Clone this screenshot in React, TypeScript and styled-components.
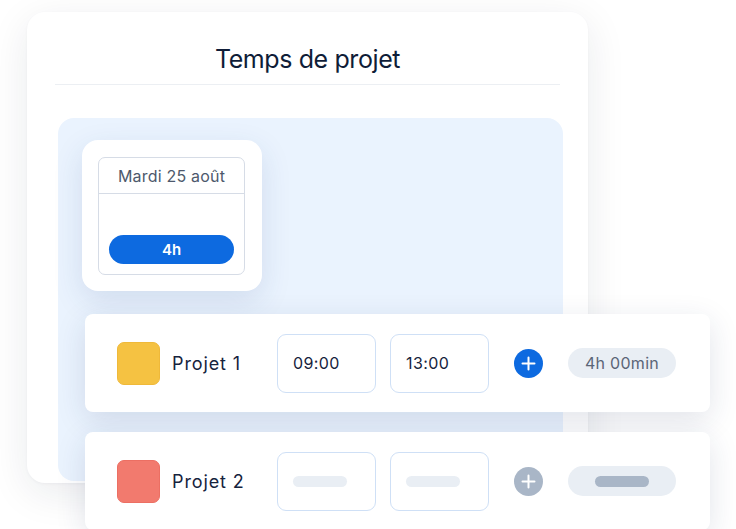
import React from "react";
import styled, { createGlobalStyle } from "styled-components";

const GlobalStyle = createGlobalStyle`
	html, body {
		margin: 0;
		padding: 0;
		background: #ffffff;
	}
	body {
		font-family: Inter, "Open Sans", "Liberation Sans", sans-serif;
		color: #13213b;
	}
`;

const Stage = styled.div`
	width: 736px;
	height: 529px;
	overflow: hidden;
	box-sizing: border-box;
	padding: 12px 0 0 27px;
	background: #ffffff;
`;

const Card = styled.div`
	width: 561px;
	height: 471px;
	border-radius: 18px;
	background: #ffffff;
	box-shadow: 0 10px 40px rgba(20, 30, 60, 0.09), 0 1px 3px rgba(20, 30, 60, 0.04);
	display: flex;
	flex-direction: column;
`;

const Header = styled.div`
	height: 73px;
	box-sizing: border-box;
	padding-top: 22px;
	margin: 0 28px;
	border-bottom: 1px solid #eceff3;
	display: flex;
	align-items: center;
	justify-content: center;
`;

const Title = styled.h1`
	margin: 0;
	font-size: 25px;
	font-weight: 400;
	letter-spacing: -0.4px;
	color: #0f1d38;
`;

const Panel = styled.div`
	margin: 33px 25px 0 31px;
	height: 363px;
	border-radius: 16px;
	background: #eaf3fe;
	box-sizing: border-box;
	padding: 22px 0 0 24px;
`;

const DateCard = styled.div`
	width: 180px;
	height: 151px;
	box-sizing: border-box;
	padding: 17px 17px 16px 16px;
	border-radius: 16px;
	background: #ffffff;
	box-shadow: 0 10px 30px rgba(40, 70, 130, 0.13);
	display: flex;
`;

const DayBox = styled.div`
	flex: 1;
	border: 1px solid #d6dce6;
	border-radius: 7px;
	display: flex;
	flex-direction: column;
`;

const DayHead = styled.div`
	height: 35px;
	border-bottom: 1px solid #d6dce6;
	display: flex;
	align-items: center;
	justify-content: center;
	font-size: 16px;
	letter-spacing: 0.2px;
	color: #4d596c;
`;

const DayBody = styled.div`
	flex: 1;
	display: flex;
	align-items: flex-end;
	padding: 0 10px 10px;
`;

const HoursPill = styled.div`
	flex: 1;
	height: 29px;
	border-radius: 15px;
	background: #0d6ae0;
	color: #ffffff;
	font-size: 15px;
	font-weight: 600;
	display: flex;
	align-items: center;
	justify-content: center;
`;

const Row = styled.div<{ $gap: number }>`
	margin: ${(p) => p.$gap}px 0 0 3px;
	width: 625px;
	height: 98px;
	flex-shrink: 0;
	box-sizing: border-box;
	padding-left: 32px;
	border-radius: 8px;
	background: #ffffff;
	box-shadow: 0 8px 30px rgba(30, 50, 90, 0.13);
	display: flex;
	align-items: center;
`;

const Swatch = styled.div<{ $color: string; $edge: string }>`
	width: 43px;
	height: 43px;
	box-sizing: border-box;
	border-radius: 7px;
	background: ${(p) => p.$color};
	border: 1px solid ${(p) => p.$edge};
`;

const Name = styled.div`
	width: 105px;
	margin-left: 12px;
	font-size: 18px;
	font-weight: 400;
	letter-spacing: 0.9px;
	color: #16233d;
`;

const TimeBox = styled.div`
	width: 99px;
	height: 59px;
	box-sizing: border-box;
	margin-right: 14px;
	padding-left: 15px;
	border: 1.5px solid #cfe0f6;
	border-radius: 9px;
	display: flex;
	align-items: center;
	font-size: 16px;
	font-weight: 400;
	letter-spacing: 0.4px;
	color: #16233d;
`;

const Placeholder = styled.div<{ $color: string }>`
	width: 54px;
	height: 11px;
	border-radius: 6px;
	background: ${(p) => p.$color};
`;

const AddButton = styled.div<{ $color: string }>`
	width: 29px;
	height: 29px;
	margin-left: 11px;
	border-radius: 50%;
	background: ${(p) => p.$color};
	display: flex;
	align-items: center;
	justify-content: center;
`;

const Total = styled.div`
	width: 108px;
	height: 30px;
	margin-left: 25px;
	border-radius: 15px;
	background: #e9eef4;
	display: flex;
	align-items: center;
	justify-content: center;
	font-size: 16px;
	font-weight: 400;
	letter-spacing: 0.3px;
	color: #5b6577;
`;

const Plus = () => (
	<svg width='15' height='15' viewBox='0 0 15 15'>
		<path d='M7.5 1.5v12M1.5 7.5h12' stroke='#ffffff' strokeWidth='2' strokeLinecap='round' />
	</svg>
);

const App: React.FC = () => {
	return (
		<>
			<GlobalStyle />
			<Stage>
				<Card>
					<Header>
						<Title>Temps de projet</Title>
					</Header>
					<Panel>
						<DateCard>
							<DayBox>
								<DayHead>Mardi 25 août</DayHead>
								<DayBody>
									<HoursPill>4h</HoursPill>
								</DayBody>
							</DayBox>
						</DateCard>

						<Row $gap={23}>
							<Swatch $color='#f5c242' $edge='#efb93a' />
							<Name>Projet 1</Name>
							<TimeBox>09:00</TimeBox>
							<TimeBox>13:00</TimeBox>
							<AddButton $color='#0d6ae0'>
								<Plus />
							</AddButton>
							<Total>4h 00min</Total>
						</Row>

						<Row $gap={20}>
							<Swatch $color='#f27a6e' $edge='#ec6f63' />
							<Name>Projet 2</Name>
							<TimeBox>
								<Placeholder $color='#e9eef4' />
							</TimeBox>
							<TimeBox>
								<Placeholder $color='#e9eef4' />
							</TimeBox>
							<AddButton $color='#a9b6c7'>
								<Plus />
							</AddButton>
							<Total>
								<Placeholder $color='#a9b6c7' />
							</Total>
						</Row>
					</Panel>
				</Card>
			</Stage>
		</>
	);
};

export default App;
